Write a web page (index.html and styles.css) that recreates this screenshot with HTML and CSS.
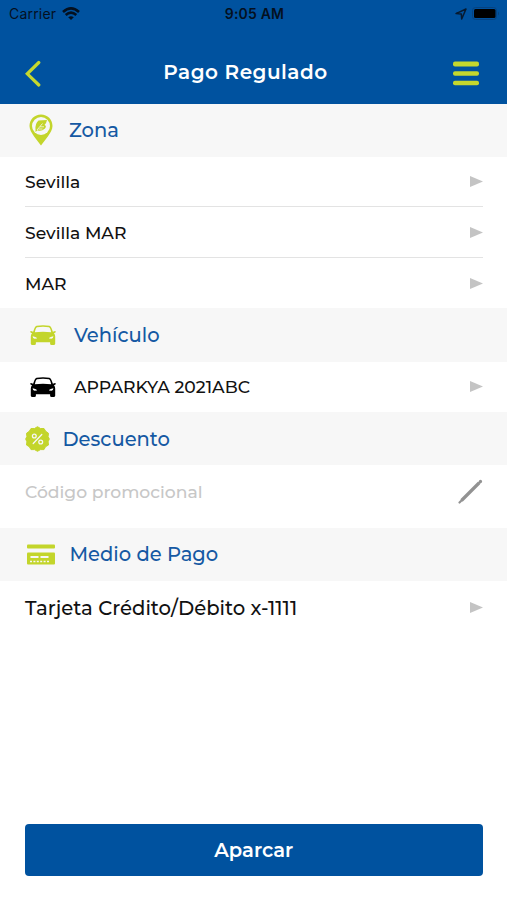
FILE: index.html
```html
<!DOCTYPE html>
<html lang="es">
<head>
  <meta charset="UTF-8">
  <meta name="viewport" content="width=device-width, initial-scale=1.0">
  <title>Pago Regulado</title>
  <link rel="stylesheet" href="styles.css">
</head>
<body>
  <svg width="0" height="0" class="symbols">
    <symbol id="car" viewBox="0 0 26 20">
      <path fill-rule="evenodd" d="M6.500 .8Q13-.3 19.500 .8Q21 1.300 21.800 3.800L22.900 6.800L25 6.100Q26.200 6.500 25.500 7.500L24 8.200Q25.200 9.700 25.200 11.500V18.800Q25 20 23.700 20H21.500Q20.200 20 20.100 18.800V17.300H5.900V18.800Q5.800 20 4.500 20H2.300Q1 20 .8 18.800V11.500Q.8 9.700 2 8.200L.5 7.500Q-.2 6.500 1 6.100L3.100 6.800L4.200 3.800Q5 1.300 6.500 .8ZM7 2.300Q6.100 2.600 5.600 4.300L4.800 7.300Q13 6.300 21.200 7.300L20.400 4.300Q19.900 2.600 19 2.300Q13 1.300 7 2.300ZM2.700 11.300Q2.600 13.500 4.500 13.700L7 13.500Q6.800 12.100 2.700 11.300ZM23.300 11.300Q19.200 12.100 19 13.500L21.500 13.700Q23.400 13.500 23.300 11.300Z"/>
    </symbol>
  </svg>

  <header class="header">
    <div class="status-bar">
      <div class="status-left">
        <span class="carrier">Carrier</span>
        <svg width="18" height="14" viewBox="0 0 18 14" fill="none" stroke="#04101f" stroke-width="2.600">
          <path d="M1 5Q9-2.200 17 5M3.700 8Q9 3.400 14.300 8"/>
          <path d="M6.200 10.200Q9 8.100 11.800 10.200L9 13Z" fill="#04101f" stroke="none"/>
        </svg>
      </div>
      <span class="time">9:05 AM</span>
      <div class="status-right">
        <svg width="12" height="12" viewBox="0 0 12 12" fill="none" stroke="#071a2f" stroke-width="1.500" stroke-linejoin="round">
          <path d="M1 5.600L11 1L6.700 11L6.300 5.900Z"/>
        </svg>
        <svg width="28" height="13" viewBox="0 0 28 13">
          <rect x=".5" y=".5" width="24" height="12" rx="3" fill="none" stroke="#07427f"/>
          <rect x="2" y="2" width="21.500" height="9" rx="1.500" fill="#000"/>
          <path d="M26 4.500Q28 6.500 26 8.500Z" fill="#07427f"/>
        </svg>
      </div>
    </div>
    <div class="nav-bar">
      <svg class="back" width="16" height="27" viewBox="0 0 16 27" fill="none" stroke="#c5d82e" stroke-width="3.200" stroke-linecap="round">
        <path d="M13.800 2.500L2.300 13.800L13.800 25"/>
      </svg>
      <h1 class="title">Pago Regulado</h1>
      <svg class="menu" width="26" height="25" viewBox="0 0 26 25" fill="#c5d82e">
        <rect width="26" height="5" y=".5" rx="2"/>
        <rect width="26" height="4.500" y="10.200" rx="2"/>
        <rect width="26" height="4.500" y="19.700" rx="2"/>
      </svg>
    </div>
  </header>

  <main class="content">
    <h2 class="section">
      <svg class="pin-icon" width="24" height="32" viewBox="0 0 24 32">
        <path d="M12 .5C5.500 .5 .5 5.500 .5 12C.5 18.500 9 27 12 31.500C15 27 23.500 18.500 23.500 12C23.500 5.500 18.500 .5 12 .5Z" fill="#c3d52b"/>
        <circle cx="12" cy="12" r="9" fill="#f7f7f7"/>
        <path d="M6.500 15.500Q6 9.500 9.500 6.500L18 6Q17.500 9 15.500 11Q18 12 16 14.500Q12 18 8.500 16.300L6.500 18Z" fill="#c3d52b"/>
        <path d="M8 16L13.500 9.500M11 12.800H15M9.500 15H13.500" stroke="#f7f7f7" stroke-width=".8"/>
      </svg>
      <span>Zona</span>
    </h2>
    <div class="row line"><span>Sevilla</span><svg class="arrow" viewBox="0 0 13 11"><path d="M0 0L13 5.500L0 11Z"/></svg></div>
    <div class="row line"><span>Sevilla MAR</span><svg class="arrow" viewBox="0 0 13 11"><path d="M0 0L13 5.500L0 11Z"/></svg></div>
    <div class="row"><span>MAR</span><svg class="arrow" viewBox="0 0 13 11"><path d="M0 0L13 5.500L0 11Z"/></svg></div>

    <h2 class="section">
      <svg class="car green"><use href="#car"/></svg>
      <span>Vehículo</span>
    </h2>
    <div class="row">
      <svg class="car"><use href="#car"/></svg>
      <span>APPARKYA 2021ABC</span>
      <svg class="arrow" viewBox="0 0 13 11"><path d="M0 0L13 5.500L0 11Z"/></svg>
    </div>

    <h2 class="section">
      <svg class="discount-icon" width="25" height="26" viewBox="0 0 25 26">
        <path d="M12.500 .7L15.500 2.500L19 2.500L20.700 5.300L23.500 7.300L23.100 10.500L24.300 13L23.100 15.800L23.500 19L20.500 20.700L19 23.600L15.500 23.600L12.500 25.300L9.500 23.600L6 23.600L4.300 20.700L1.500 19L1.900 15.800L.7 13L1.900 10.500L1.500 7.300L4.300 5.300L6 2.500L9.500 2.500Z" fill="#c3d52b" stroke="#c3d52b" stroke-linejoin="round"/>
        <g fill="none" stroke="#f7f7f7" stroke-width="1.300" stroke-linecap="round">
          <path d="M16.800 8.500L8.200 17.500"/>
          <circle cx="9.300" cy="10" r="1.900"/>
          <circle cx="15.700" cy="16" r="1.900"/>
        </g>
      </svg>
      <span>Descuento</span>
    </h2>
    <div class="row promo">
      <span class="placeholder">Código promocional</span>
      <svg class="pencil" width="26" height="26" viewBox="0 0 26 26" fill="none" stroke="#929292" stroke-linecap="round">
        <path d="M2.500 23.500L23.500 2.500" stroke-width="2.200"/>
        <path d="M4.500 21.500L22 4" stroke-width="3.200" stroke-linecap="butt"/>
        <path d="M23.300 2.700L23.500 2.500" stroke-width="3.200"/>
      </svg>
    </div>

    <h2 class="section">
      <svg class="card-icon" width="28" height="21" viewBox="0 0 28 21">
        <rect y=".5" width="28" height="4" rx="1" fill="#c3d52b"/>
        <rect y="8.500" width="28" height="12" rx="1" fill="#c3d52b"/>
        <g stroke="#f7f7f7">
          <path d="M3.500 13H11.500M13.500 13H21.500" stroke-width="2"/>
          <path d="M3 17.500H22" stroke-width="1.500" stroke-dasharray="2 1.400"/>
        </g>
      </svg>
      <span>Medio de Pago</span>
    </h2>
    <div class="row payment"><span>Tarjeta Crédito/Débito x-1111</span><svg class="arrow" viewBox="0 0 13 11"><path d="M0 0L13 5.500L0 11Z"/></svg></div>
  </main>

  <footer class="footer">
    <button class="submit">Aparcar</button>
  </footer>
</body>
</html>
```
FILE: styles.css
```css
* {
  box-sizing: border-box;
}
body {
  display: flex;
  flex-direction: column;
  height: 900px;
  margin: 0;
  font-family: Montserrat, Inter, sans-serif;
  color: #111;
  background-color: #fff;
  overflow: hidden;
}
svg {
  display: block;
  flex-shrink: 0;
}
.symbols {
  position: absolute;
}
h1, h2 {
  margin: 0;
  font-weight: 500;
}
.header {
  height: 103.6px;
  background-color: #00529f;
}
.status-bar {
  display: grid;
  grid-template-columns: 1fr auto 1fr;
  align-items: center;
  height: 27px;
  padding: 0 7px 0 9px;
  font-family: Inter, sans-serif;
  font-size: 14px;
  color: #04101f;
}
.status-left, .status-right {
  display: flex;
  align-items: center;
  gap: 6px;
}
.status-right {
  justify-content: flex-end;
  gap: 5px;
}
.carrier {
  letter-spacing: 0.2px;
}
.time {
  font-weight: 600;
  letter-spacing: 0.2px;
}
.nav-bar {
  display: flex;
  align-items: center;
  justify-content: space-between;
  height: 77px;
  padding: 16px 28px 0 25px;
}
.title {
  padding: 0 3px 3px 0;
  font-size: 20px;
  font-weight: 600;
  letter-spacing: 0.5px;
  color: #fff;
}
.section {
  display: flex;
  align-items: center;
  height: 53.1px;
  padding: 0 25px;
  font-size: 19.5px;
  color: #1559a3;
  background-color: #f7f7f7;
}
.row {
  display: flex;
  align-items: center;
  height: 50.6px;
  margin: 0 24.5px 0 25px;
  font-size: 17.2px;
  font-weight: 500;
}
.line {
  padding-top: 1px;
  border-bottom: 1px solid #e3e3e3;
}
.arrow {
  width: 13px;
  height: 11px;
  margin-left: auto;
  fill: #c4c4c4;
}
.car {
  width: 26px;
  height: 20px;
  margin: 0 18px 0 5px;
  fill: #000;
}
.green {
  fill: #c3d52b;
}
.pin-icon {
  margin: 0 16px 0 4px;
}
.discount-icon {
  margin-right: 12.5px;
}
.card-icon {
  margin: 0 14.5px 0 2px;
}
.promo {
  height: 62.7px;
  padding-bottom: 9.5px;
}
.placeholder {
  color: #c7c7c7;
}
.pencil {
  margin-left: auto;
}
.payment {
  height: 53px;
  font-size: 19.65px;
}
.footer {
  margin-top: auto;
  padding: 0 24.5px 24.5px 25px;
}
.submit {
  width: 100%;
  height: 51.5px;
  padding: 0;
  border: none;
  border-radius: 4px;
  font-family: inherit;
  font-size: 19.5px;
  font-weight: 600;
  color: #fff;
  background-color: #00529f;
}
```
